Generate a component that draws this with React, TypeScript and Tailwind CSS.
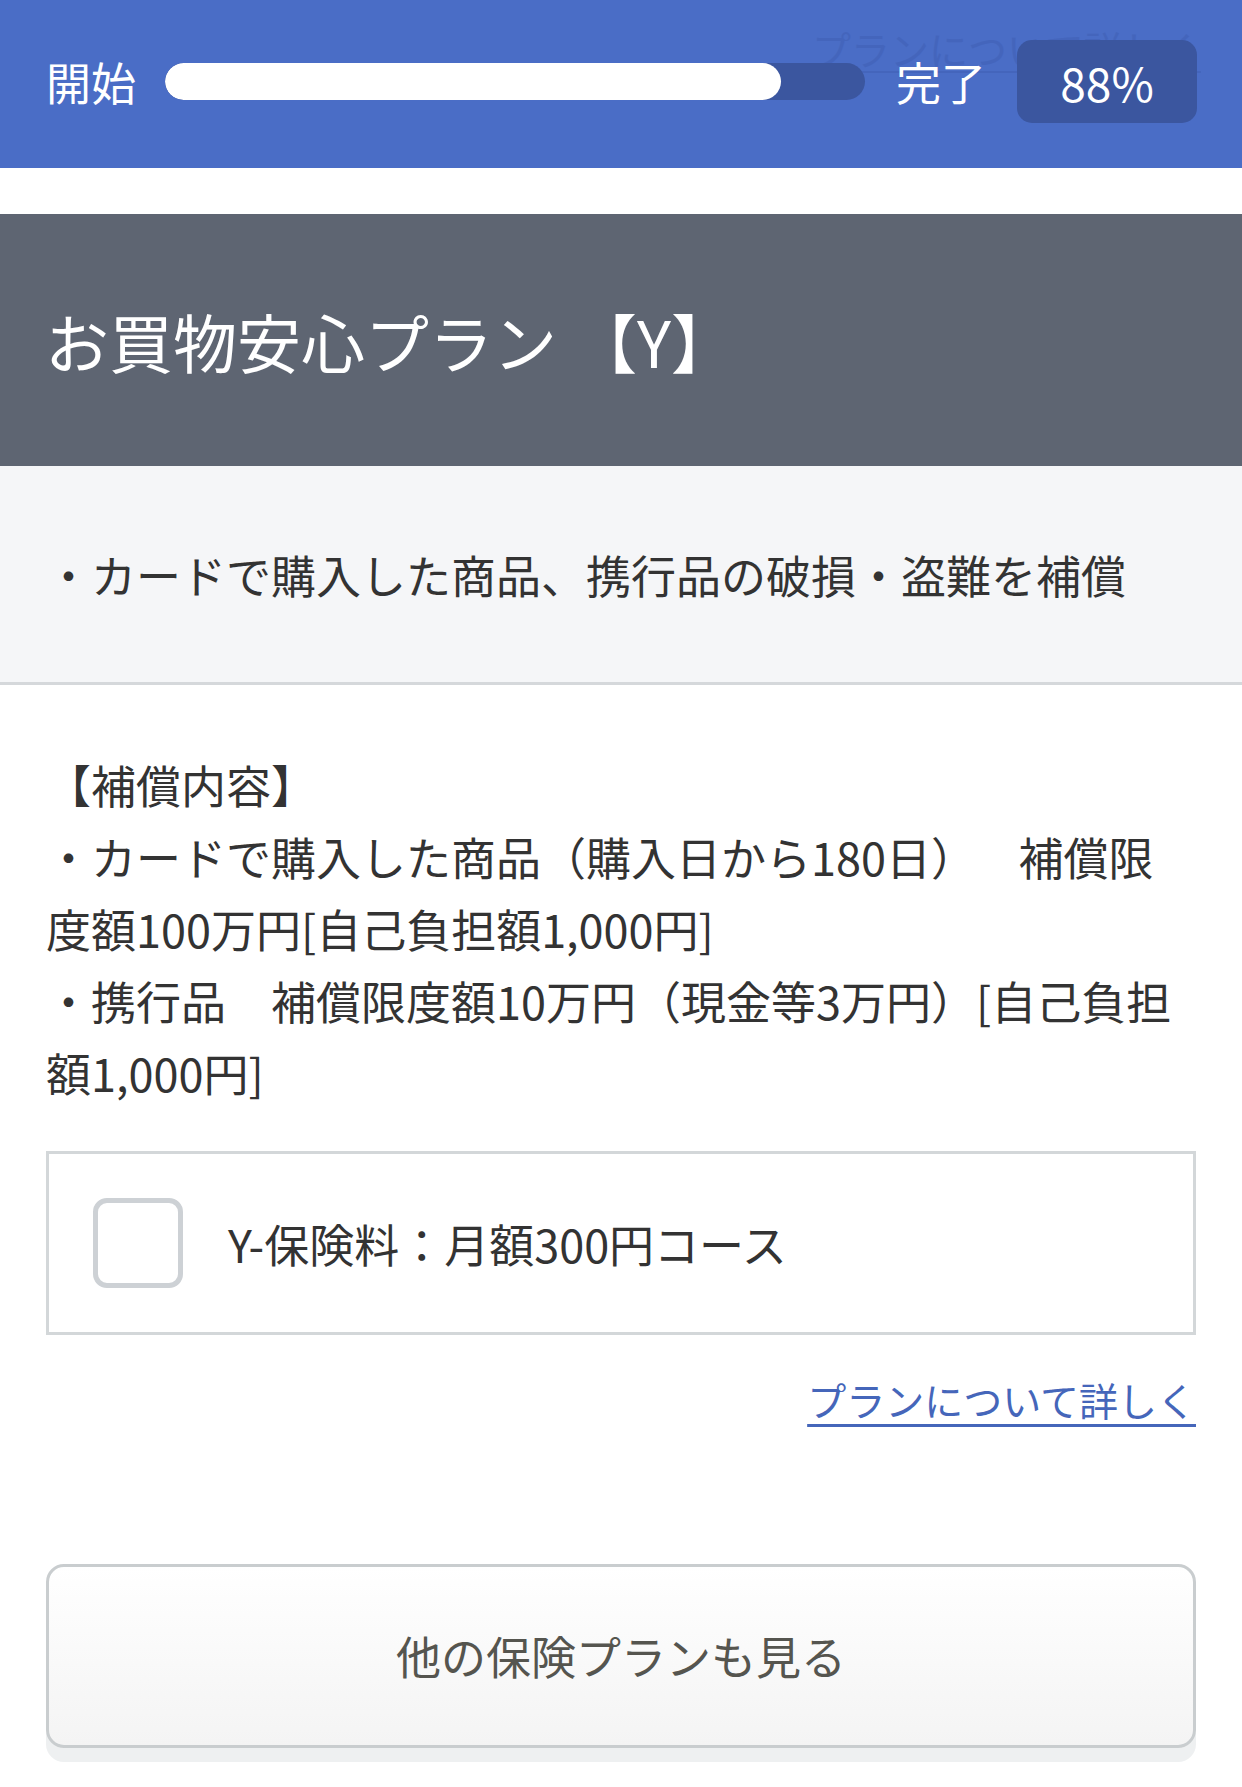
import React from "react";

const progress = 88;

const ProgressHeader: React.FC = () => {
  return (
    <header className="relative flex h-[168px] items-center bg-[#4a6dc6] pb-[5px] pl-[46px] text-white">
      {/* ghost of the link, left over from the scrolled screenshot */}
      <span className="absolute left-[812px] top-[26px] whitespace-nowrap text-[39px] leading-[44px] text-[#3f5fb4] underline decoration-[2px] underline-offset-[6px] opacity-50">
        プランについて詳しく
      </span>

      <span className="relative shrink-0 whitespace-nowrap text-[45px] leading-none">
        開始
      </span>
      <div className="relative ml-[29px] h-[37px] w-[700px] shrink-0 overflow-hidden rounded-full bg-[#3b569f]">
        <div
          className="h-full rounded-full bg-white"
          style={{ width: `${progress}%` }}
        />
      </div>
      <span className="relative ml-[31px] shrink-0 whitespace-nowrap text-[45px] leading-none">
        完了
      </span>
      <div className="relative ml-[31px] flex h-[83px] w-[180px] shrink-0 items-center justify-center rounded-[15px] bg-[#3b569f] text-[46px] leading-none">
        {progress}%
      </div>
    </header>
  );
};

const CoverageText: React.FC = () => {
  return (
    <div className="px-[46px] pt-[64px] text-[45px] leading-[72px] text-[#333]">
      <p>【補償内容】</p>
      <p>
        {"・カードで購入した商品（購入日から180日）　"}
        <span className="ml-[20px]">補償限</span>
        <br />
        度額100万円[自己負担額1,000円]
      </p>
      <p>
        {"・携行品　補償限度額10万円（現金等3万円）[自己負担"}
        <br />
        額1,000円]
      </p>
    </div>
  );
};

const CourseOption: React.FC = () => {
  return (
    <div className="mx-[46px] mt-[42px] flex h-[184px] items-center border-[3px] border-[#d3d7d9] bg-white px-[44px]">
      <div className="h-[90px] w-[90px] shrink-0 rounded-[14px] border-[5px] border-[#cdd1d5] bg-white" />
      <span className="ml-[45px] text-[45px] leading-none text-[#333]">
        Y-保険料：月額300円コース
      </span>
    </div>
  );
};

export default function App() {
  return (
    <div className="min-h-[1787px] w-[1242px] bg-white font-['Noto_Sans_CJK_JP','Noto_Sans',sans-serif]">
      <ProgressHeader />

      <div className="h-[46px]" />

      {/* Plan title */}
      <div className="flex h-[252px] items-center bg-[#5e6572] px-[45px]">
        <h1 className="whitespace-nowrap text-[64px] font-normal leading-none text-white">
          お買物安心プラン<span className="ml-[16px]">【Y】</span>
        </h1>
      </div>

      {/* Summary */}
      <div className="flex h-[219px] items-center border-b-[3px] border-[#d5d8db] bg-[#f5f6f8] px-[46px]">
        <p className="text-[45px] leading-none text-[#333]">
          ・カードで購入した商品、携行品の破損・盗難を補償
        </p>
      </div>

      <CoverageText />
      <CourseOption />

      <div className="mx-[46px] mt-[33px] text-right text-[39px] leading-[62px]">
        <a
          href="#"
          className="text-[#4566ba] underline decoration-[3px] underline-offset-[8px]"
        >
          プランについて詳しく
        </a>
      </div>

      <div className="mx-[46px] mt-[134px]">
        <button className="flex h-[184px] w-full items-center justify-center rounded-[18px] border-[3px] border-[#c9cdcf] bg-gradient-to-b from-white to-[#f4f4f4] text-[45px] text-[#55554f] shadow-[0_14px_0_#eef0f1]">
          他の保険プランも見る
        </button>
      </div>
    </div>
  );
}
